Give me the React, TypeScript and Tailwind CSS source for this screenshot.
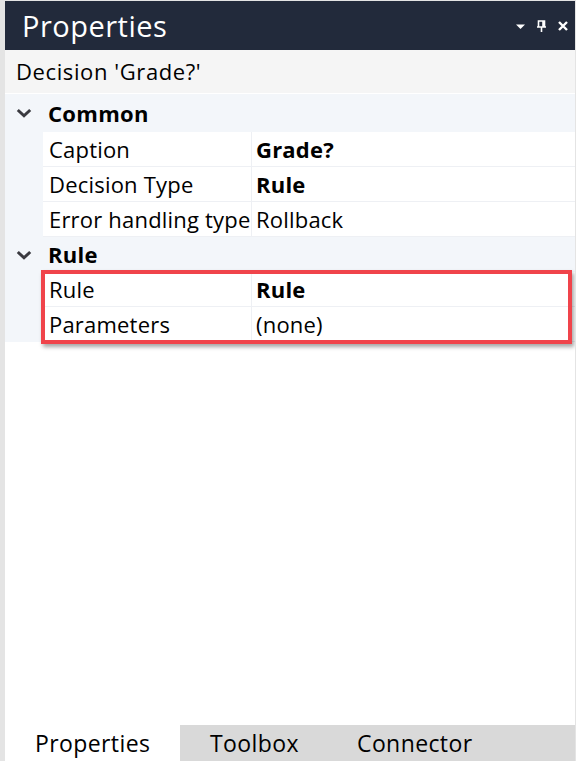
import React from 'react'

const font = { fontFamily: '"Open Sans", "Noto Sans", sans-serif' }

function Chevron() {
  return (
    <svg width="16" height="10" viewBox="0 0 16 10" className="block">
      <path d="M1.8 2 L8 7.8 L14.2 2" fill="none" stroke="#3a3a40" strokeWidth="3" />
    </svg>
  )
}

function Category({ label, h }: { label: string; h: string }) {
  return (
    <div className={`flex items-center ${h}`}>
      <div className="w-[38px] flex justify-center">
        <Chevron />
      </div>
      <span className="pl-[5px] text-[22px] font-bold text-black tracking-[0.3px]">{label}</span>
    </div>
  )
}

function Row({ name, value, bold }: { name: string; value: string; bold?: boolean }) {
  return (
    <div className="flex h-[35px]">
      <div className="w-[38px] shrink-0" />
      <div className="flex flex-1 bg-white border-b border-[#eef0f4]">
        <div className="w-[209px] shrink-0 pl-[6px] flex items-center border-r border-[#eef0f4] text-[22px] tracking-[0.2px] text-black whitespace-nowrap overflow-hidden">
          {name}
        </div>
        <div className={`flex items-center pl-[4px] text-[22px] tracking-[0.2px] text-black ${bold ? 'font-bold' : ''}`}>
          {value}
        </div>
      </div>
    </div>
  )
}

export default function App() {
  return (
    <div
      className="w-[576px] h-[761px] flex flex-col bg-white border-l-[5px] border-t border-r border-[#e4e4e4] overflow-hidden"
      style={font}
    >
      {/* Title bar */}
      <div className="h-[49px] shrink-0 bg-[#222a3b] flex items-center justify-between pl-[17px] pr-[6px]">
        <span className="text-white text-[29px] tracking-[0.5px]">Properties</span>
        <div className="flex items-center gap-[10px] mt-[1px]">
          <svg width="11" height="11" viewBox="0 0 11 11">
            <path d="M1 3.5 H10 L5.5 8 Z" fill="#fff" />
          </svg>
          <svg width="11" height="13" viewBox="0 0 11 13">
            <path d="M2.5 1 H8.5 V7 H2.5 Z M1 7 H10 M5.5 7 V12 M7 1.5 V6.5" fill="none" stroke="#fff" strokeWidth="1.6" />
          </svg>
          <svg width="12" height="12" viewBox="0 0 12 12">
            <path d="M2 2 L10 10 M10 2 L2 10" stroke="#fff" strokeWidth="2.4" />
          </svg>
        </div>
      </div>

      {/* Selected object */}
      <div className="h-[44px] shrink-0 bg-[#f5f5f5] flex items-center pl-[11px] text-[22px] tracking-[0.6px] text-black border-b border-white">
        Decision 'Grade?'
      </div>

      {/* Property grid */}
      <div className="bg-[#f3f6fa] shrink-0">
        <Category label="Common" h="h-[38px]" />
        <Row name="Caption" value="Grade?" bold />
        <Row name="Decision Type" value="Rule" bold />
        <Row name="Error handling type" value="Rollback" />
        <Category label="Rule" h="h-[35px]" />
        <div className="relative">
          <Row name="Rule" value="Rule" bold />
          <Row name="Parameters" value="(none)" />
          <div className="absolute left-[36px] top-[-2px] w-[531px] h-[74px] border-[4px] border-[#f0444b] shadow-[2px_3px_4px_rgba(0,0,0,0.35)] pointer-events-none" />
        </div>
      </div>

      <div className="flex-1" />

      {/* Tabs */}
      <div className="h-[36px] shrink-0 bg-[#d9d9d9] flex items-center text-[23px] tracking-[0.4px] text-black">
        <div className="h-full w-[175px] bg-white flex items-center pl-[30px]">Properties</div>
        <div className="w-[147px] pl-[30px]">Toolbox</div>
        <div className="pl-[30px]">Connector</div>
      </div>
    </div>
  )
}
